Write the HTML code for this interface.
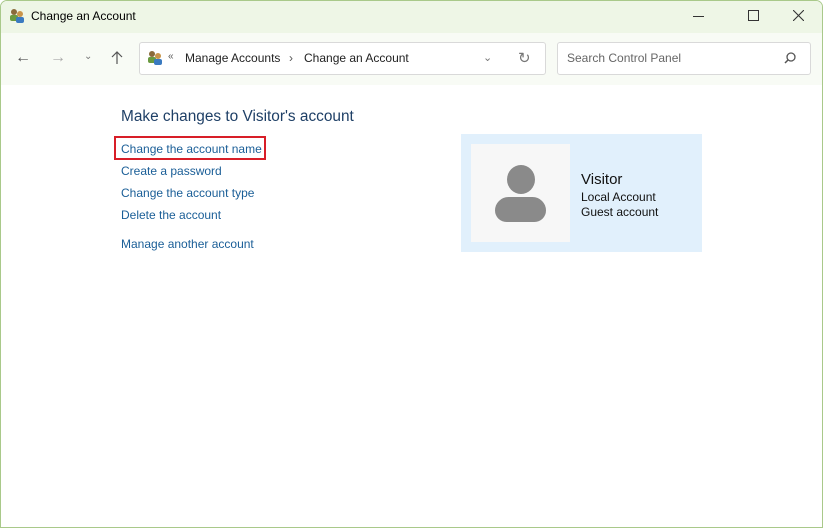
<!DOCTYPE html>
<html><head><style>
body{margin:0;width:823px;height:528px;overflow:hidden;font-family:"Liberation Sans",sans-serif;background:#fff;position:relative}
.win{position:absolute;left:0;top:0;width:821px;height:526px;border:1px solid #a9c98a;border-radius:7px 7px 0 0;background:#fff;overflow:hidden}
.title{position:absolute;left:0;top:0;width:821px;height:32px;background:#eef6e6}
.tb{position:absolute;left:0;top:32px;width:821px;height:52px;background:#f8fbf5}
.t{position:absolute;font-size:12px;color:#000;white-space:nowrap}
.a{position:absolute;font-size:12px;color:#1a5e97;white-space:nowrap}
.box{position:absolute;border:1px solid #d9d9d9;background:#fff;border-radius:3px}
</style></head><body>
<div class="win">
<div class="title"></div>
<div class="tb"></div>
<svg style="position:absolute;left:8px;top:7px" width="16" height="16"><circle cx="5" cy="4" r="3" fill="#8a6a3a"/><rect x="1" y="7" width="8" height="6" rx="2" fill="#6a9a40"/><circle cx="11" cy="6" r="3" fill="#c8944a"/><rect x="7" y="9" width="8" height="6" rx="2" fill="#3a7ac0"/></svg>
<div class="t" style="left:30px;top:8px">Change an Account</div>
<div style="position:absolute;left:692px;top:15px;width:11px;height:1px;background:#333"></div>
<div style="position:absolute;left:747px;top:9px;width:9px;height:9px;border:1px solid #333"></div>
<svg style="position:absolute;left:792px;top:9px" width="11" height="11"><path d="M0 0L11 11M11 0L0 11" stroke="#333" stroke-width="1.1"/></svg>
<div class="t" style="left:14px;top:48px;font-size:16px;color:#555">&#8592;</div>
<div class="t" style="left:49px;top:48px;font-size:16px;color:#aaa">&#8594;</div>
<div class="t" style="left:83px;top:50px;font-size:10px;color:#777">&#8964;</div>
<svg style="position:absolute;left:110px;top:50px" width="12" height="14"><path d="M6 1V13M1 6L6 1L11 6" fill="none" stroke="#555" stroke-width="1.2"/></svg>
<div class="box" style="left:138px;top:41px;width:405px;height:31px"></div>
<svg style="position:absolute;left:146px;top:49px" width="16" height="16"><circle cx="5" cy="4" r="3" fill="#8a6a3a"/><rect x="1" y="7" width="8" height="6" rx="2" fill="#6a9a40"/><circle cx="11" cy="6" r="3" fill="#c8944a"/><rect x="7" y="9" width="8" height="6" rx="2" fill="#3a7ac0"/></svg>
<div class="t" style="left:167px;top:50px;font-size:10px;color:#555">&laquo;</div>
<div class="t" style="left:184px;top:50px;color:#222">Manage Accounts</div>
<div class="t" style="left:288px;top:50px;color:#555">&#8250;</div>
<div class="t" style="left:303px;top:50px;color:#222">Change an Account</div>
<div class="t" style="left:482px;top:50px;font-size:11px;color:#777">&#8964;</div>
<div class="t" style="left:517px;top:48px;font-size:15px;color:#777">&#8635;</div>
<div class="box" style="left:556px;top:41px;width:252px;height:31px"></div>
<div class="t" style="left:566px;top:50px;color:#666">Search Control Panel</div>
<svg style="position:absolute;left:783px;top:51px" width="12" height="12"><circle cx="7" cy="5" r="4" fill="none" stroke="#555" stroke-width="1.3"/><line x1="4" y1="8" x2="1" y2="11" stroke="#555" stroke-width="1.5"/></svg>
<div class="t" style="left:120px;top:107px;font-size:15.4px;color:#1e3f66">Make changes to Visitor's account</div>
<div style="position:absolute;left:113px;top:135px;width:152px;height:24px;border:2px solid #d81e28;box-sizing:border-box"></div>
<div class="a" style="left:120px;top:141px">Change the account name</div>
<div class="a" style="left:120px;top:163px">Create a password</div>
<div class="a" style="left:120px;top:185px">Change the account type</div>
<div class="a" style="left:120px;top:207px">Delete the account</div>
<div class="a" style="left:120px;top:236px">Manage another account</div>
<div style="position:absolute;left:460px;top:133px;width:241px;height:118px;background:#e1f0fc"></div>
<div style="position:absolute;left:470px;top:143px;width:99px;height:98px;background:#f7f7f7"></div>
<div style="position:absolute;left:506px;top:164px;width:28px;height:29px;border-radius:50%;background:#8a8a8a"></div>
<div style="position:absolute;left:494px;top:196px;width:51px;height:25px;border-radius:14px 14px 12px 12px;background:#8a8a8a"></div>
<div class="t" style="left:580px;top:170px;font-size:15px;color:#111">Visitor</div>
<div class="t" style="left:580px;top:189px;color:#111">Local Account</div>
<div class="t" style="left:580px;top:204px;color:#111">Guest account</div>
</div>
</body></html>
